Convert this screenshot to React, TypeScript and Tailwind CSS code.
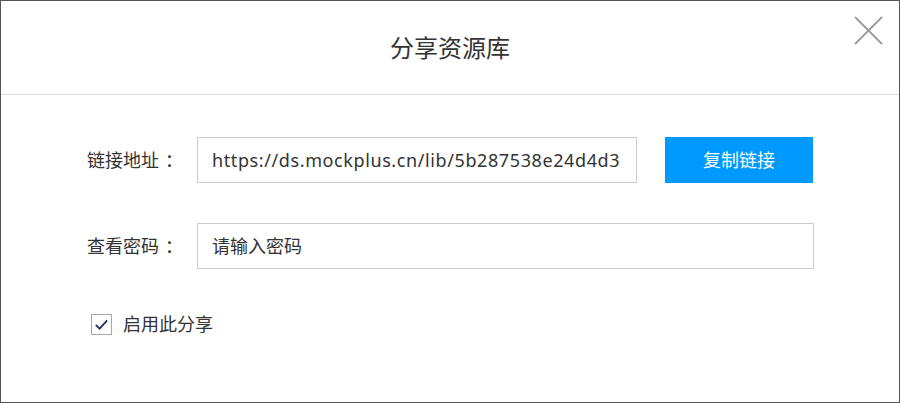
import { useState } from "react";

const font = { fontFamily: '"Noto Sans", "Noto Sans CJK SC", sans-serif' };

export default function App() {
  const [enabled, setEnabled] = useState(true);

  return (
    <div className="relative w-[900px] h-[403px] border border-[#555555] bg-white text-[#333333]" style={font}>
      {/* header */}
      <div className="h-[94px] border-b border-[#dddddd] flex items-center justify-center">
        <h1 className="text-[24px] leading-none">分享资源库</h1>
      </div>
      <button className="absolute top-[15px] right-[16px] w-[29px] h-[29px]">
        <svg viewBox="0 0 29 29" width="29" height="29" stroke="#9a9a9a" strokeWidth="1.8">
          <line x1="1" y1="1" x2="28" y2="28" />
          <line x1="28" y1="1" x2="1" y2="28" />
        </svg>
      </button>

      {/* body */}
      <div className="pl-[86px] pt-[42px] flex flex-col">
        <div className="flex items-center h-[46px]">
          <label className="w-[110px] text-[18px]">
            链接地址<span className="ml-[6px]">：</span>
          </label>
          <div className="w-[440px] h-[46px] border border-[#cccccc] pl-[14px] flex items-center overflow-hidden whitespace-nowrap text-[18px] tracking-[0.6px]">
            https://ds.mockplus.cn/lib/5b287538e24d4d3
          </div>
          <button className="ml-[28px] w-[148px] h-[46px] bg-[#0099ff] text-white text-[18px]">复制链接</button>
        </div>

        <div className="flex items-center h-[46px] mt-[40px]">
          <label className="w-[110px] text-[18px]">
            查看密码<span className="ml-[6px]">：</span>
          </label>
          <input
            className="w-[617px] h-[46px] border border-[#cccccc] pl-[14px] text-[18px] outline-none placeholder:text-[#333333]"
            placeholder="请输入密码"
            style={font}
          />
        </div>

        <label className="flex items-center mt-[42px] ml-[4px] cursor-pointer select-none">
          <span
            onClick={() => setEnabled(!enabled)}
            className="w-[21px] h-[21px] border border-[#a8a8a8] flex items-center justify-center"
          >
            {enabled && (
              <svg viewBox="0 0 16 16" width="15" height="15" fill="none" stroke="#23395d" strokeWidth="2">
                <path d="M2 8.5 L6 12.5 L14 3.5" />
              </svg>
            )}
          </span>
          <span className="ml-[11px] text-[18px]">启用此分享</span>
        </label>
      </div>
    </div>
  );
}
